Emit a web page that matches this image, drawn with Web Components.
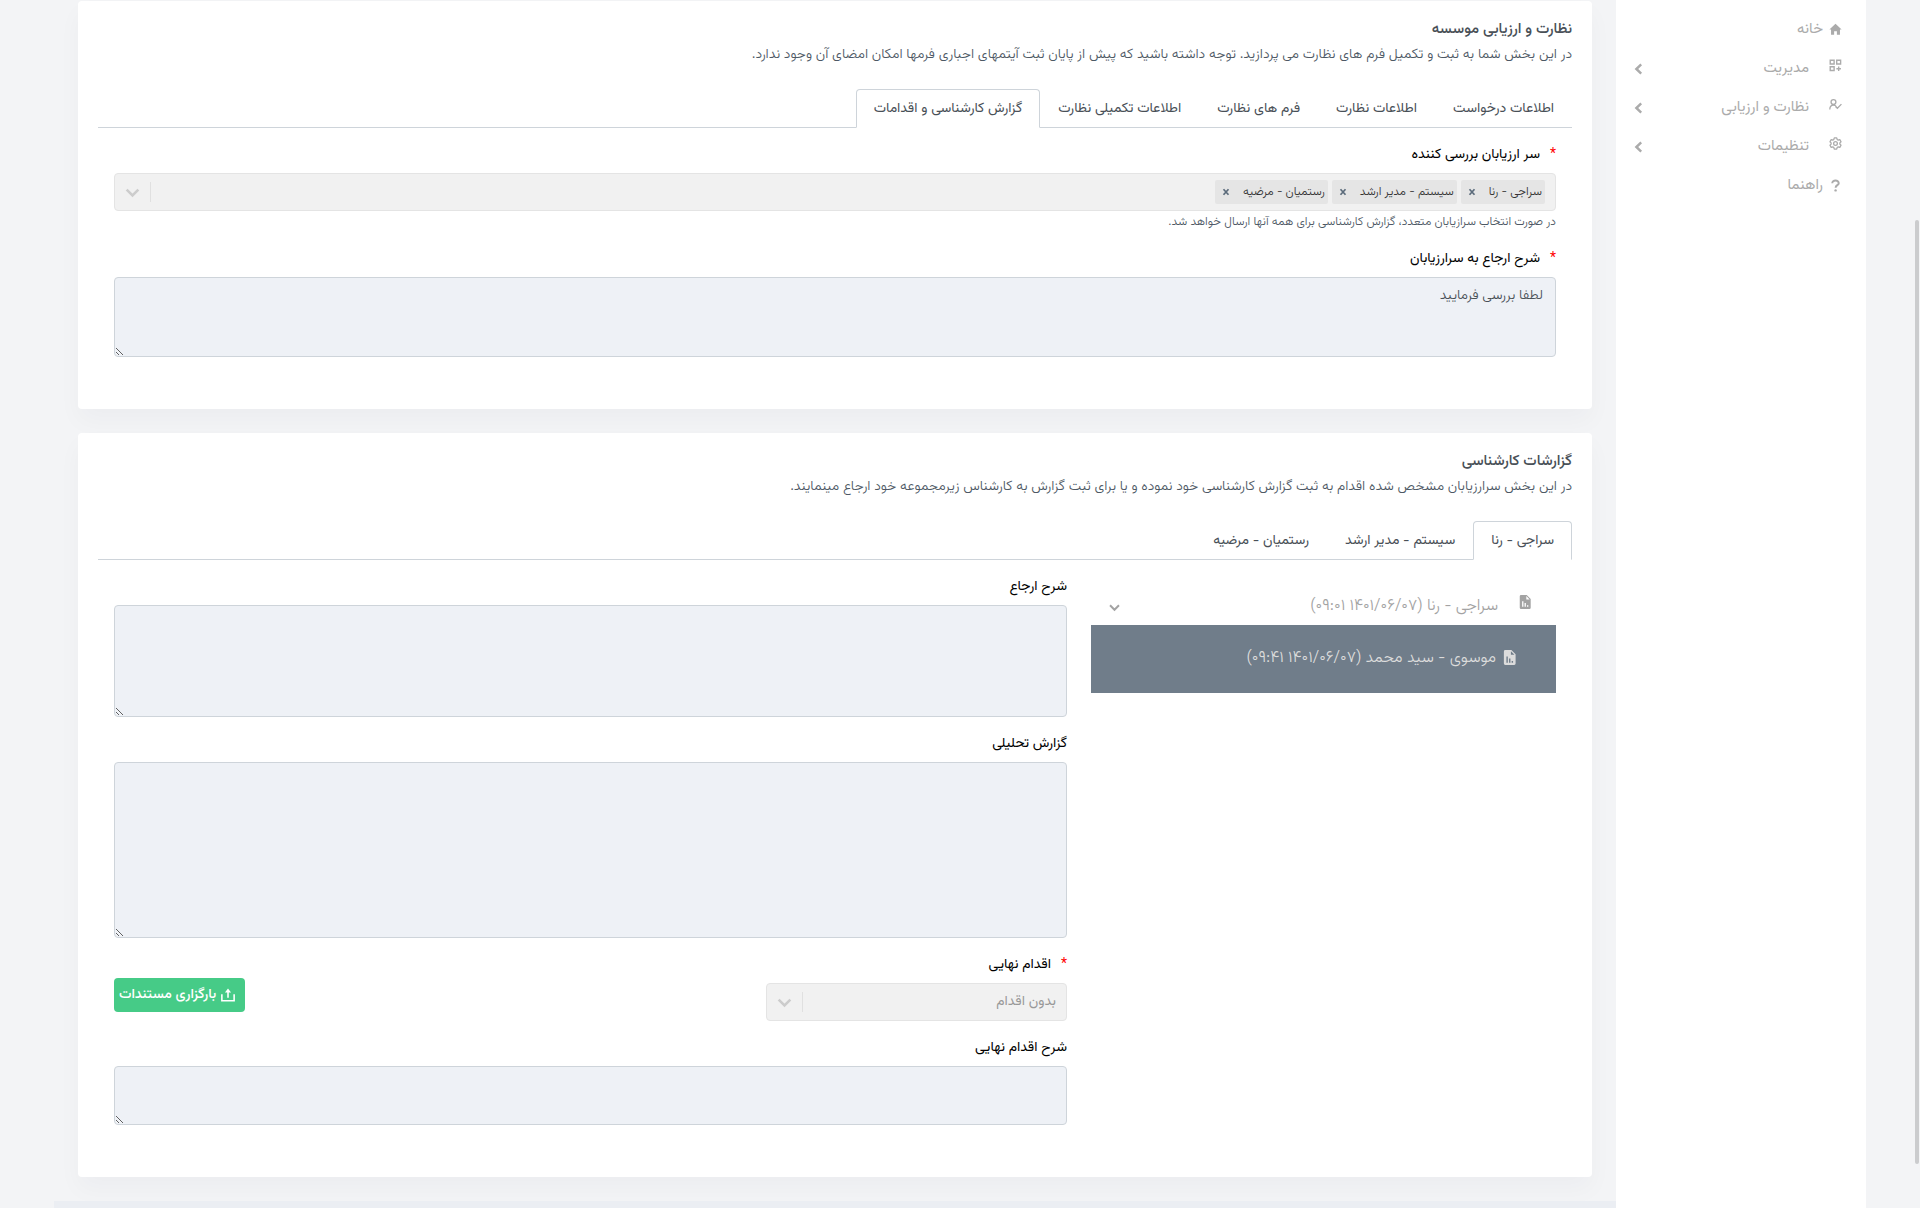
<!DOCTYPE html>
<html lang="fa" dir="rtl">
<head>
<meta charset="utf-8">
<meta name="viewport" content="width=device-width, initial-scale=1">
<title>نظارت و ارزیابی موسسه</title>
<style>
  body { margin: 0; background: #f3f4f6; font-family: Vazirmatn, "DejaVu Sans", "Noto Sans", sans-serif; font-size: 14px; line-height: 20px; color: #495057; }
</style>
</head>
<body>

<app-shell>
  <side-nav slot="nav">
    <nav-item icon="home">خانه</nav-item>
    <nav-item icon="grid" group>مدیریت</nav-item>
    <nav-item icon="user" group>نظارت و ارزیابی</nav-item>
    <nav-item icon="gear" group>تنظیمات</nav-item>
    <nav-item icon="help">راهنما</nav-item>
  </side-nav>

  <panel-card>
    <span slot="title">نظارت و ارزیابی موسسه</span>
    <span slot="subtitle">در این بخش شما به ثبت و تکمیل فرم های نظارت می پردازید. توجه داشته باشید که پیش از پایان ثبت آیتمهای اجباری فرمها امکان امضای آن وجود ندارد.</span>
    <tab-bar slot="tabs" selected="4" items="اطلاعات درخواست|اطلاعات نظارت|فرم های نظارت|اطلاعات تکمیلی نظارت|گزارش کارشناسی و اقدامات"></tab-bar>
    <field-stack>
      <multi-select label="سر ارزیابان بررسی کننده" values="سراجی - رنا|سیستم - مدیر ارشد|رستمیان - مرضیه" hint="در صورت انتخاب سرازیابان متعدد، گزارش کارشناسی برای همه آنها ارسال خواهد شد."></multi-select>
      <text-field label="شرح ارجاع به سرارزیابان" required rows="3" value="لطفا بررسی فرمایید"></text-field>
    </field-stack>
  </panel-card>

  <panel-card>
    <span slot="title">گزارشات کارشناسی</span>
    <span slot="subtitle">در این بخش سرارزیابان مشخص شده اقدام به ثبت گزارش کارشناسی خود نموده و یا برای ثبت گزارش به کارشناس زیرمجموعه خود ارجاع مینمایند.</span>
    <tab-bar slot="tabs" selected="0" items="سراجی - رنا|سیستم - مدیر ارشد|رستمیان - مرضیه"></tab-bar>
    <split-row>
      <report-tree slot="side" parent="سراجی - رنا (۱۴۰۱/۰۶/۰۷ ۰۹:۰۱)" child="موسوی - سید محمد (۱۴۰۱/۰۶/۰۷ ۰۹:۴۱)"></report-tree>
      <field-stack>
        <text-field label="شرح ارجاع" rows="5"></text-field>
        <text-field label="گزارش تحلیلی" rows="7"></text-field>
        <action-row>
          <choice-field label="اقدام نهایی" value="بدون اقدام"></choice-field>
          <upload-button slot="action">بارگزاری مستندات</upload-button>
        </action-row>
        <text-field label="شرح اقدام نهایی" rows="1"></text-field>
      </field-stack>
    </split-row>
  </panel-card>
</app-shell>

<script>
  const icons = {
    home: '<path fill="currentColor" d="M8 .8 15.500 8H13.500v6.500H9.700V10H6.300v4.500H2.500V8H.5z"/>',
    grid: '<g fill="none" stroke="currentColor" stroke-width="1.700"><path d="M1.500 1.500h4.800v4.600H1.500zM9.500 1.500h4.800v4.600H9.500zM1.500 9.600h4.800v4.600H1.500z"/><path d="M11.900 9.200v5.600M9.100 12h5.600"/></g>',
    user: '<g fill="none" stroke="currentColor" stroke-width="1.600"><circle cx="5.500" cy="5" r="3"/><path d="M1 14c0-3 1.500-5.200 4.500-5.200 1.700 0 2.900.8 3.600 2M8 10.500l2.300 2.200 5-5.200"/></g>',
    gear: '<g fill="none" stroke="currentColor" stroke-width="1.600" stroke-linejoin="round"><path d="M6.500 1h3l.5 2 1.300.8 2-.6 1.500 2.600L13.400 7.200v1.600l1.400 1.400-1.500 2.600-2-.6-1.300.8-.5 2h-3L6 13l-1.300-.8-2 .6-1.500-2.600 1.400-1.400V7.200L1.200 5.800l1.500-2.600 2 .6L6 3z"/><circle cx="8" cy="8" r="2.300"/></g>',
    help: '<path fill="none" stroke="currentColor" stroke-width="2.400" d="M4 5.200C4 3 5.700 1.800 8 1.800s4 1.300 4 3.300c0 2.500-3.900 2.500-3.900 5.600"/><circle cx="8.100" cy="14" r="1.500" fill="currentColor"/>',
    report: '<path fill="currentColor" fill-rule="evenodd" d="M3.500 0H10l4.500 4.500V14.500q0 1.500-1.500 1.500H3.500Q2 16 2 14.500v-13Q2 0 3.500 0zM9.500 1.200V5h3.800zM4.700 7v6.500h1.500V7zM7.500 9v4.500H9V9zM10.300 11.700v1.800h1.500v-1.800z"/>',
    upload: '<path fill="none" stroke="currentColor" stroke-width="1.800" d="M1 7v7.500h14V7M8 11V3"/><path fill="currentColor" d="M8 .5 11.500 5h-7z"/>',
    down: '<path fill="none" stroke="currentColor" stroke-width="2.400" d="m2.500 5.200 5.500 5.600 5.500-5.600"/>',
    side: '<path fill="none" stroke="currentColor" stroke-width="2.800" d="m10.500 2.800-5.500 5.200 5.500 5.200"/>',
    cross: '<path fill="none" stroke="currentColor" stroke-width="3.400" d="m3 2.500 10 11M13 2.500l-10 11"/>'
  };
  const icon = (name, size) => `<svg viewBox="0 0 16 16" width="${size}" height="${size}" aria-hidden="true">${icons[name]}</svg>`;
  const base = '*{box-sizing:border-box}:host{display:block}:host([hidden]){display:none}svg{display:block;flex:none}button,textarea,select,input{font:inherit;color:inherit}';
  const fieldCss = `
    label{display:block;color:#000;font-weight:450;line-height:22px;margin-bottom:7px}
    .star{color:#f00;margin-inline-end:10px}`;
  const star = '<span class="star">*</span>';

  function define(name, css, render) {
    customElements.define(name, class extends HTMLElement {
      constructor() { super(); this.attachShadow({ mode: 'open' }); }
      connectedCallback() {
        this.shadowRoot.innerHTML = `<style>${base}${css}</style>${render(this)}`;
      }
    });
  }

  define('app-shell', `
    :host{display:flex;min-height:100vh;padding:0 54px;overflow:hidden}
    aside{flex:none;width:250px;background:#fff;position:relative}
    .page{flex:1;min-width:0;display:flex;flex-direction:column}
    main{display:flex;flex-direction:column;gap:24px;padding:1px 24px 24px}
    footer{flex:1;background:#ebeef3;min-height:7px}
    .thumb{position:fixed;right:1px;top:220px;width:4px;height:944px;background:#cbccce;border-radius:2px}
  `, () => `<aside><slot name="nav"></slot></aside>
    <div class="page"><main><slot></slot></main><footer></footer></div><div class="thumb"></div>`);

  define('side-nav', `nav{display:flex;flex-direction:column;gap:18px;padding:19px 24px 0 16px}`,
    () => `<nav><slot></slot></nav>`);

  define('nav-item', `
    a{display:flex;align-items:center;gap:6px;color:#ababab;text-decoration:none;font-size:15px;line-height:21px}
    :host([group]) a{gap:20px}
    .lead{padding-bottom:1px}
    :host([group]) .lead{padding-bottom:7px}
    .text{flex:1}
  `, el => `<a href="#"><span class="lead">${icon(el.getAttribute('icon'), 13)}</span><span class="text"><slot></slot></span>${el.hasAttribute('group') ? icon('side', 14) : ''}</a>`);

  define('panel-card', `
    section{background:#fff;border-radius:4px;box-shadow:0 12px 24px rgba(18,38,63,.03);padding:18px 20px 52px}
    h2{margin:0;font-size:15px;font-weight:500;line-height:22px;color:#495057}
    p{margin:4px 0 24px;font-size:14px;font-weight:300;line-height:20px;color:#4d5864}
    .body{padding:16px 16px 0}
  `, () => `<section><h2><slot name="title"></slot></h2><p><slot name="subtitle"></slot></p>
    <slot name="tabs"></slot><div class="body"><slot></slot></div></section>`);

  define('tab-bar', `
    div{display:flex;border-bottom:1px solid #ced4da}
    button{margin:0 0 -1px;padding:9px 17px 7px;border:1px solid transparent;border-radius:4px 4px 0 0;background:none;font-weight:450;line-height:21px;color:#495057;white-space:nowrap}
    button[aria-selected=true]{border-color:#ced4da #ced4da #fff;background:#fff}
  `, el => `<div role="tablist">${el.getAttribute('items').split('|').map((t, i) =>
      `<button type="button" role="tab" aria-selected="${i == el.getAttribute('selected')}">${t}</button>`).join('')}</div>`);

  define('field-stack', `:host{display:flex;flex-direction:column;gap:16px}`, () => `<slot></slot>`);

  define('text-field', fieldCss + `
    textarea{display:block;width:100%;resize:vertical;padding:8px 12px;font-weight:350;line-height:21px;border:1px solid #ced4da;border-radius:4px;background:#eef1f6;color:#495057}
    textarea[rows="1"]{height:59px}
    textarea[rows="3"]{height:80px}
    textarea[rows="5"]{height:112px}
    textarea[rows="7"]{height:176px}
  `, el => `<label for="t">${el.hasAttribute('required') ? star : ''}${el.getAttribute('label')}</label>
    <textarea id="t" rows="${el.getAttribute('rows')}" disabled>${el.getAttribute('value') || ''}</textarea>`);

  define('multi-select', fieldCss + `
    .box{display:flex;align-items:center;height:38px;border:1px solid #e4e4e4;border-radius:4px;background:#f1f1f1;padding-inline-start:10px}
    .chips{display:flex;gap:4px}
    .chip{display:flex;align-items:center;height:24px;background:#e5e5e5;border-radius:2px;padding:0 3px;font-size:12px;font-weight:350;line-height:18px;color:#333}
    .chip button{border:0;background:none;color:#5b6b7b;padding:0 4px;margin-inline-start:9px}
    input{flex:1;min-width:0;border:0;background:none}
    .end{border-inline-start:1px solid #e0e0e0;padding:6px 9px;height:20px;display:flex;align-items:center;color:#ccc}
    small{display:block;margin-top:2px;font-size:12px;font-weight:300;line-height:19px;color:#4d5864}
  `, el => `<label for="m">${star}${el.getAttribute('label')}</label>
    <div class="box"><div class="chips">${el.getAttribute('values').split('|').map(v =>
      `<span class="chip">${v}<button type="button" aria-label="حذف ${v}" disabled>${icon('cross', 8)}</button></span>`).join('')}</div>
      <input id="m" disabled><span class="end">${icon('down', 17)}</span></div>
    <small>${el.getAttribute('hint')}</small>`);

  define('choice-field', fieldCss + `
    .box{display:flex;align-items:center;height:38px;border:1px solid #e4e4e4;border-radius:4px;background:#f1f1f1}
    select{flex:1;min-width:0;height:36px;appearance:none;border:0;background:none;padding:0 10px;color:#999;opacity:1}
    .end{border-inline-start:1px solid #e0e0e0;padding:6px 9px;height:20px;display:flex;align-items:center;color:#ccc}
  `, el => `<label for="s">${star}${el.getAttribute('label')}</label>
    <div class="box"><select id="s" disabled><option>${el.getAttribute('value')}</option></select><span class="end">${icon('down', 17)}</span></div>`);

  define('action-row', `
    :host{display:grid;grid-template-columns:301px 1fr;align-items:end}
    .action{display:flex;justify-content:flex-end;padding-bottom:9px}
  `, () => `<slot></slot><div class="action"><slot name="action"></slot></div>`);

  define('upload-button', `
    button{display:flex;align-items:center;gap:5px;height:34px;padding:0 10px 0 5px;border:0;border-radius:4px;background:#46cb87;color:#fff;font-weight:500;line-height:20px}
  `, () => `<button type="button">${icon('upload', 14)}<slot></slot></button>`);

  define('split-row', `
    :host{display:grid;grid-template-columns:465px 1fr;gap:24px}
  `, () => `<slot name="side"></slot><slot></slot>`);

  define('report-tree', `
    ul{list-style:none;margin:0;padding:19px 0 0}
    a{display:flex;align-items:center;text-decoration:none;font-size:16px;font-weight:350;line-height:24px}
    .parent{gap:20px;padding:0 24px 6px 17px;color:#a3a3a3}
    .parent .lead{padding-bottom:10px}
    .parent .text{flex:1}
    .child{gap:6px;height:68px;padding:0 39px;background:#707d8a;color:#dcdcdc}
    .child svg{margin-bottom:4px}
  `, el => `<ul><li><a class="parent" href="#"><span class="lead">${icon('report', 14)}</span><span class="text">${el.getAttribute('parent')}</span>${icon('down', 13)}</a></li>
    <li><a class="child" href="#">${icon('report', 15)}<span>${el.getAttribute('child')}</span></a></li></ul>`);
</script>
</body>
</html>
